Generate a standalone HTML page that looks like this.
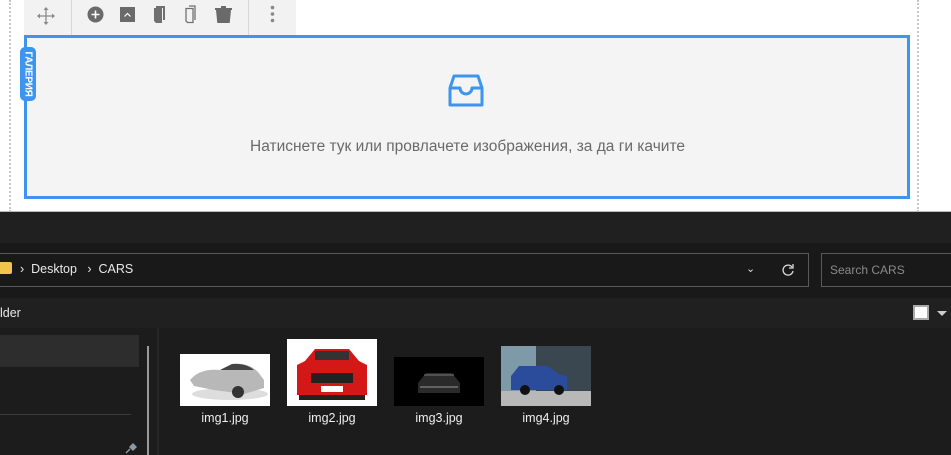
<!DOCTYPE html>
<html><head><meta charset="utf-8"><style>
*{margin:0;padding:0;box-sizing:border-box}
body{width:951px;height:455px;overflow:hidden;background:#fff;position:relative;font-family:"Liberation Sans",sans-serif}
.abs{position:absolute}
.dot{position:absolute;top:0;height:212px;border-left:2px dotted #c8c8c8}
</style></head><body>
<div class="dot" style="left:9px"></div>
<div class="dot" style="left:917px"></div>
<!-- toolbar -->
<div class="abs" style="left:24px;top:0;width:272px;height:35px;background:#f2f2f2"></div>
<div class="abs" style="left:71px;top:0;width:1px;height:35px;background:#d8d8d8"></div>
<div class="abs" style="left:248px;top:0;width:1px;height:35px;background:#d8d8d8"></div>
<svg class="abs" style="left:0;top:0" width="300" height="35">
 <g stroke="#8a8a8a" stroke-width="1.3" fill="none"><path d="M46 9v14M39 16h14"/></g>
 <g fill="#8a8a8a"><path d="M46 7l-2.5 3h5zM46 25l-2.5-3h5zM37 16l3-2.5v5zM55 16l-3-2.5v5z"/></g>
 <circle cx="95.5" cy="14.5" r="8" fill="#6a6a6a"/><path d="M95.5 10.5v8M91.5 14.5h8" stroke="#fff" stroke-width="1.6"/>
 <rect x="120" y="7" width="15" height="15" fill="#6a6a6a"/><path d="M124.5 16.5l3-3 3 3" stroke="#fff" stroke-width="1.2" fill="none"/>
 <path d="M154 8h8v15h-6l-2-2z" fill="#707070"/><path d="M163 6h2v14h-2z" fill="#707070"/><path d="M156 6h9v2h-9z" fill="#707070"/>
 <path d="M186 8.5h7v14h-5.5l-1.5-1.5z" fill="none" stroke="#707070" stroke-width="1.3"/><path d="M189 6h6v14" fill="none" stroke="#707070" stroke-width="1.3"/>
 <path d="M216 10h15l-1.3 13h-12.4z" fill="#6a6a6a"/><rect x="215" y="8" width="17" height="2" fill="#6a6a6a"/><rect x="221" y="6" width="5" height="2" fill="#6a6a6a"/>
 <circle cx="272.5" cy="7.5" r="1.8" fill="#888"/><circle cx="272.5" cy="14" r="1.8" fill="#888"/><circle cx="272.5" cy="20.5" r="1.8" fill="#888"/>
</svg>
<!-- gallery box -->
<div class="abs" style="left:24px;top:35px;width:886px;height:164px;border:3px solid #3d95ef;background:#f4f4f4"></div>
<div class="abs" style="left:20px;top:47px;width:16px;height:54px;background:#3d95ef;border-radius:5px"></div>
<div class="abs" style="left:28px;top:74px;transform:translate(-50%,-50%) rotate(90deg);color:#fff;font-size:10px;font-weight:bold;white-space:nowrap;letter-spacing:-0.3px">ГАЛЕРИЯ</div>
<svg class="abs" style="left:448px;top:74px" width="40" height="38"><path d="M2 14L6 2h24l4 12v17H2zM2 14h10a6 6 0 0 0 12 0h10" fill="none" stroke="#3d95ef" stroke-width="3" stroke-linejoin="round"/></svg>
<div class="abs" style="left:0;width:935px;top:138px;text-align:center;font-size:15.5px;color:#6a6a6a;white-space:nowrap">Натиснете тук или провлачете изображения, за да ги качите</div>
<!-- explorer -->
<div class="abs" style="left:0;top:211px;width:951px;height:1px;background:#bbb"></div>
<div class="abs" style="left:0;top:212px;width:951px;height:243px;background:#1c1c1c;font-family:'Liberation Sans',sans-serif">
 <div class="abs" style="left:0;top:0;width:951px;height:31px;background:#202020"></div>
 <div class="abs" style="left:0;top:31px;width:951px;height:55px;background:#191919"></div>
 <div class="abs" style="left:-2px;top:41px;width:811px;height:34px;border:1px solid #5a5a5a;background:#191919"></div>
 <div class="abs" style="left:0;top:50px;width:12px;height:12px;background:#f2c44d;border-radius:0 2px 2px 0"></div>
 <div class="abs" style="left:20px;top:50px;font-size:12.5px;color:#e8e8e8;white-space:nowrap">›&nbsp;&nbsp;Desktop&nbsp;&nbsp;&nbsp;›&nbsp;&nbsp;CARS</div>
 <div class="abs" style="left:746px;top:50px;font-size:11px;color:#ddd">⌄</div>
 <svg class="abs" style="left:781px;top:51px" width="14" height="14"><path d="M11 4A5 5 0 1 0 12 8" fill="none" stroke="#ddd" stroke-width="1.3"/><path d="M12 1v4H8" fill="none" stroke="#ddd" stroke-width="1.3"/></svg>
 <div class="abs" style="left:821px;top:41px;width:140px;height:34px;border:1px solid #5a5a5a"></div>
 <div class="abs" style="left:830px;top:51px;font-size:12px;color:#8a8a8a">Search CARS</div>
 <div class="abs" style="left:0;top:86px;width:951px;height:30px;background:#202020"></div>
 <div class="abs" style="left:0;top:94px;font-size:12.5px;color:#e8e8e8">lder</div>
 <div class="abs" style="left:913px;top:93px;width:16px;height:15px;border:2px solid #aaa;background:#fff"></div>
 <div class="abs" style="left:937px;top:99px;width:0;height:0;border-left:5px solid transparent;border-right:5px solid transparent;border-top:5px solid #ccc"></div>
 <div class="abs" style="left:0;top:123px;width:139px;height:32px;background:#2d2d2d"></div>
 <div class="abs" style="left:147px;top:134px;width:2px;height:109px;background:#9a9a9a"></div>
 <div class="abs" style="left:157px;top:116px;width:2px;height:127px;background:#262626"></div>
 <div class="abs" style="left:0;top:202px;width:131px;height:1px;background:#3a3a3a"></div>
 <svg class="abs" style="left:124px;top:229px" width="14" height="14"><path d="M2 12l4-4" stroke="#8a9aa8" stroke-width="1.5"/><path d="M5 6l4-4 4 4-4 4z" fill="#8a9aa8"/></svg>
 <!-- thumbs -->
 <svg class="abs" style="left:180px;top:142px" width="90" height="52"><rect width="90" height="52" fill="#fff"/><ellipse cx="50" cy="40" rx="38" ry="6" fill="#ddd"/><path d="M10 26q10-12 30-10l12-6q16-2 26 8l6 8v8l-20 6-30-4-20-4z" fill="#b8b8b8"/><path d="M40 16l12-6q14-1 22 6z" fill="#444"/><circle cx="58" cy="38" r="6" fill="#333"/></svg>
 <svg class="abs" style="left:287px;top:127px" width="90" height="67"><rect width="90" height="67" fill="#fff"/><path d="M18 22l10-12h34l10 12 8 4v30H10V26z" fill="#d41818"/><rect x="28" y="12" width="34" height="9" fill="#333"/><rect x="24" y="34" width="42" height="10" fill="#222"/><rect x="34" y="47" width="22" height="6" fill="#fff"/><rect x="12" y="56" width="66" height="5" fill="#222"/></svg>
 <svg class="abs" style="left:394px;top:145px" width="90" height="49"><rect width="90" height="49" fill="#000"/><path d="M24 26l8-10h26l8 10v10H24z" fill="#2a2a2a"/><path d="M30 18h30" stroke="#777"/><path d="M26 30h38" stroke="#999"/></svg>
 <svg class="abs" style="left:501px;top:134px" width="90" height="60"><rect width="90" height="60" fill="#3a4650"/><rect width="35" height="45" fill="#7e9aa8"/><rect y="45" width="90" height="15" fill="#b8b8b8"/><path d="M10 30l8-10h28l12 8 8 2v14H10z" fill="#2a4c9a"/><circle cx="24" cy="44" r="5" fill="#111"/><circle cx="58" cy="44" r="5" fill="#111"/></svg>
 <div class="abs" style="left:180px;top:199px;width:90px;text-align:center;font-size:12.5px;color:#eee">img1.jpg</div>
 <div class="abs" style="left:287px;top:199px;width:90px;text-align:center;font-size:12.5px;color:#eee">img2.jpg</div>
 <div class="abs" style="left:394px;top:199px;width:90px;text-align:center;font-size:12.5px;color:#eee">img3.jpg</div>
 <div class="abs" style="left:501px;top:199px;width:90px;text-align:center;font-size:12.5px;color:#eee">img4.jpg</div>
</div>
</body></html>
